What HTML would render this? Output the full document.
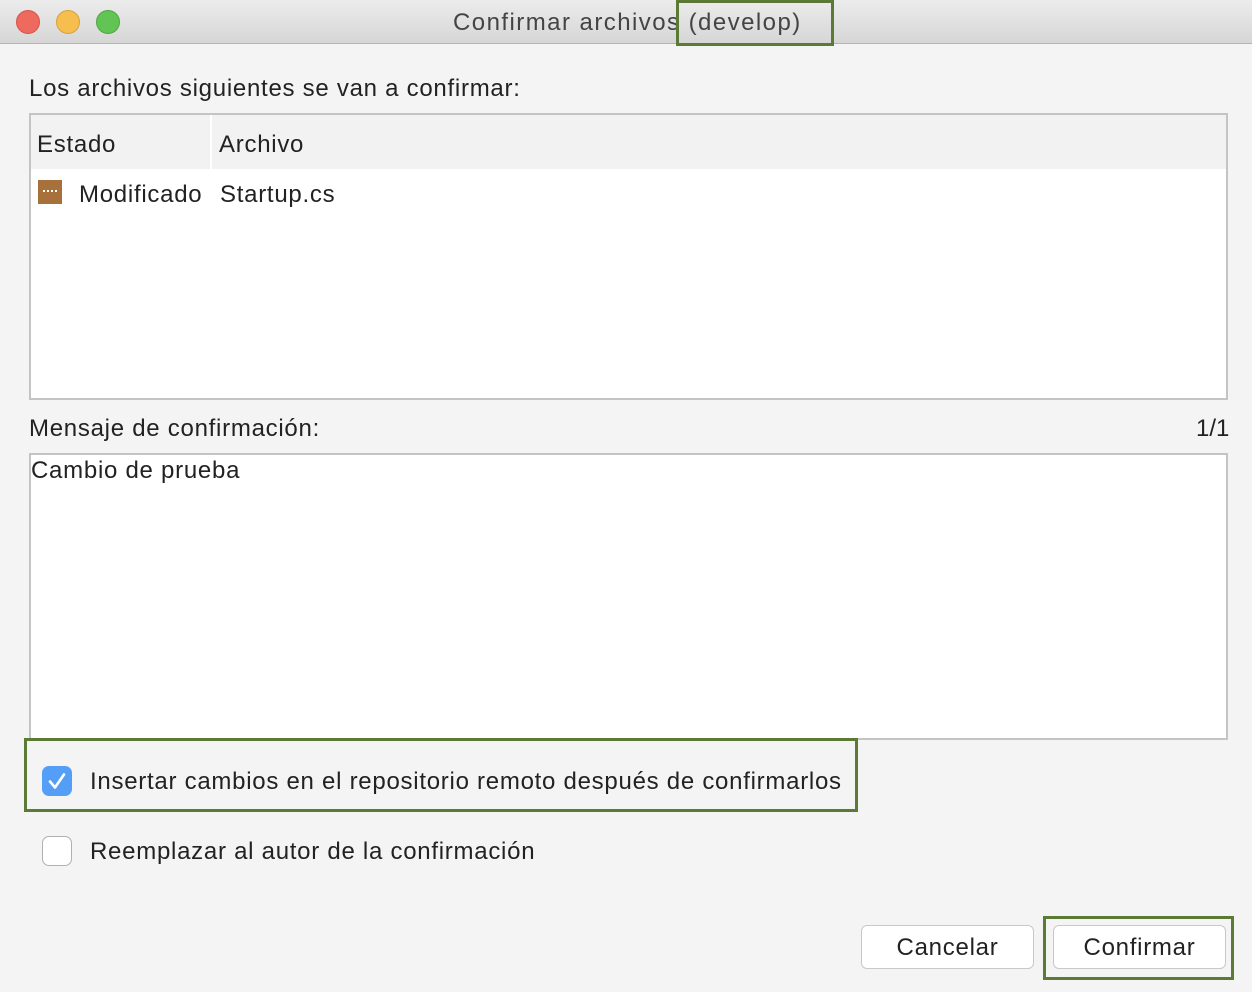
<!DOCTYPE html><html><head><style>
body{margin:0;width:1252px;height:992px;background:#f4f4f4;font-family:"Liberation Sans",sans-serif;color:#222;position:relative;overflow:hidden}
.a{position:absolute}
.t{font-size:24px;letter-spacing:0.73px;white-space:nowrap}
</style></head><body>
<div class="a" style="left:0;top:0;width:1252px;height:43px;background:linear-gradient(#ececec,#d6d6d6);border-bottom:1px solid #b4b4b4"></div>
<div class="a" style="left:16px;top:10px;width:24px;height:24px;border-radius:50%;background:#ee6a5f;border:1px solid #d4544a;box-sizing:border-box"></div>
<div class="a" style="left:56px;top:10px;width:24px;height:24px;border-radius:50%;background:#f5be4f;border:1px solid #d8a13a;box-sizing:border-box"></div>
<div class="a" style="left:96px;top:10px;width:24px;height:24px;border-radius:50%;background:#61c454;border:1px solid #4ba83f;box-sizing:border-box"></div>
<div class="a t" style="left:453px;top:9px;color:#444;letter-spacing:1.45px">Confirmar archivos (develop)</div>
<div class="a" style="left:676px;top:0;width:158px;height:46px;border:3px solid #5a7a35;box-sizing:border-box"></div>
<div class="a t" style="left:29px;top:75px">Los archivos siguientes se van a confirmar:</div>
<div class="a" style="left:29px;top:113px;width:1199px;height:287px;border:2px solid #c4c4c4;box-sizing:border-box;background:#fff"></div>
<div class="a" style="left:31px;top:115px;width:1195px;height:54px;background:#f2f2f2"></div>
<div class="a" style="left:210px;top:115px;width:2px;height:54px;background:#fff"></div>
<div class="a t" style="left:37px;top:131px">Estado</div>
<div class="a t" style="left:219px;top:131px">Archivo</div>
<div class="a" style="left:38px;top:180px;width:24px;height:24px;background:#a8703a"></div>
<div class="a" style="left:43px;top:190px;width:14px;height:2px;background:repeating-linear-gradient(90deg,#fff 0 2px,transparent 2px 4px)"></div>
<div class="a t" style="left:79px;top:181px">Modificado</div>
<div class="a t" style="left:220px;top:181px">Startup.cs</div>
<div class="a t" style="left:29px;top:415px">Mensaje de confirmación:</div>
<div class="a t" style="left:1196px;top:415px;letter-spacing:0">1/1</div>
<div class="a" style="left:29px;top:453px;width:1199px;height:287px;border:2px solid #c4c4c4;box-sizing:border-box;background:#fff"></div>
<div class="a t" style="left:31px;top:457px">Cambio de prueba</div>
<div class="a" style="left:24px;top:738px;width:834px;height:74px;border:3px solid #5a7a35;box-sizing:border-box"></div>
<div class="a" style="left:42px;top:766px;width:30px;height:30px;border-radius:7px;background:#559ef7"></div>
<svg class="a" style="left:42px;top:766px" width="30" height="30"><path d="M8 15.5l5 6 9-13" stroke="#fff" stroke-width="2.6" fill="none" stroke-linecap="round" stroke-linejoin="round"/></svg>
<div class="a t" style="left:90px;top:768px">Insertar cambios en el repositorio remoto después de confirmarlos</div>
<div class="a" style="left:42px;top:836px;width:30px;height:30px;border-radius:7px;background:#fff;border:1px solid #b0b0b0;box-sizing:border-box"></div>
<div class="a t" style="left:90px;top:838px">Reemplazar al autor de la confirmación</div>
<div class="a t" style="left:861px;top:925px;width:173px;height:44px;background:#fff;border:1px solid #c8c8c8;border-radius:6px;box-sizing:border-box;text-align:center;line-height:44px">Cancelar</div>
<div class="a t" style="left:1053px;top:925px;width:173px;height:44px;background:#fff;border:1px solid #c8c8c8;border-radius:6px;box-sizing:border-box;text-align:center;line-height:44px">Confirmar</div>
<div class="a" style="left:1043px;top:916px;width:191px;height:64px;border:3px solid #5a7a35;box-sizing:border-box"></div>
</body></html>
